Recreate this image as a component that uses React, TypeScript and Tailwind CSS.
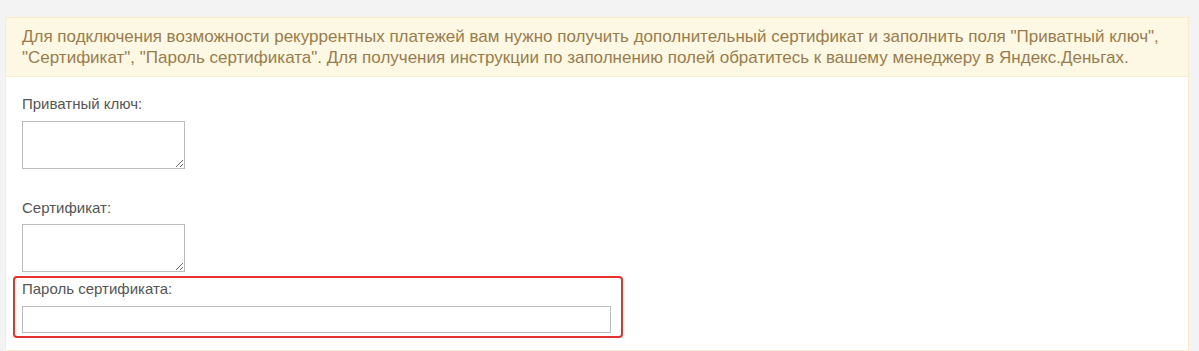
export default function App() {
  return (
    <div className="min-h-[351px] bg-[#f3f3f3] pt-[17px] pl-[5px] pr-[10px] font-['Liberation_Sans','Noto_Sans',sans-serif]">
      <section className="border border-[#faebcc] bg-white">
        <div className="border-b border-[#faebcc] bg-[#fcf8e3] px-[16px] pt-[8px] pb-[8px] text-[17px] leading-[21px] text-[#9a7c4c]">
          Для подключения возможности рекуррентных платежей вам нужно получить дополнительный сертификат и
          заполнить поля "Приватный ключ", "Сертификат", "Пароль сертификата". Для получения инструкции по
          заполнению полей обратитесь к вашему менеджеру в Яндекс.Деньгах.
        </div>

        <div className="px-[16px] pt-[17px] pb-[12px] text-[15px] leading-[20px] text-[#555]">
          <label className="block">
            <span className="block">Приватный ключ:</span>
            <textarea className="mt-[7px] block h-[48px] w-[163px] border border-[#bcbcbc] bg-white" />
          </label>

          <label className="mt-[29px] block">
            <span className="block">Сертификат:</span>
            <textarea className="mt-[6px] block h-[48px] w-[163px] border border-[#bcbcbc] bg-white" />
          </label>

          <div className="-ml-[9px] mt-[4px] w-[610px] rounded-[4px] border-2 border-[#e5322d] pt-[1px] pb-[3px] pl-[7px]">
            <label className="block">
              <span className="block">Пароль сертификата:</span>
              <input type="password" className="mt-[7px] block h-[27px] w-[589px] border border-[#bcbcbc] bg-white" />
            </label>
          </div>
        </div>
      </section>
    </div>
  );
}
